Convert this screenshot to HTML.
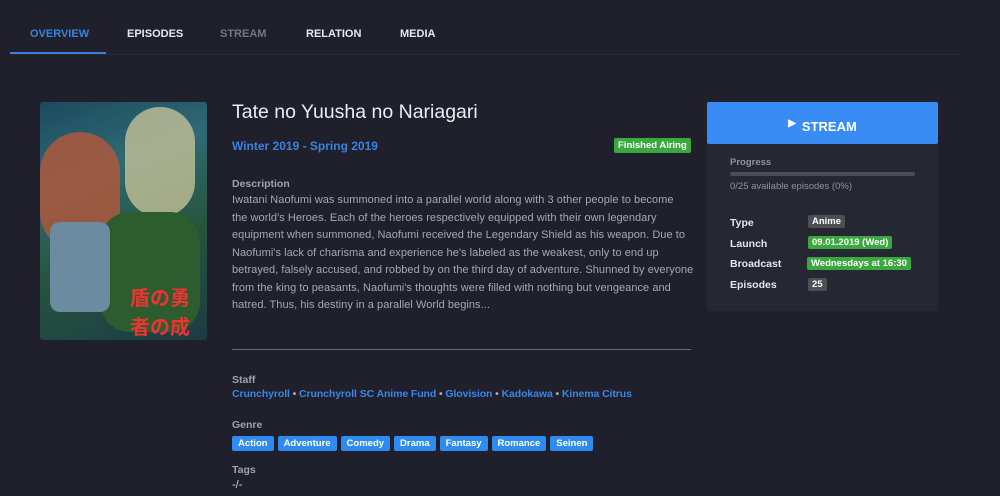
<!DOCTYPE html>
<html><head><style>
*{margin:0;padding:0;box-sizing:border-box}
body{width:1000px;height:496px;overflow:hidden;background:#1f202b;font-family:"Liberation Sans",Arial,sans-serif;color:#e6e6ea;position:relative}
.nav{position:absolute;left:10px;top:0;width:950px;height:55px;border-bottom:1px solid #272935}
.nav span{position:absolute;top:28px;font-size:11px;font-weight:bold;color:#e8e8ec}
.ul{position:absolute;left:10px;top:52px;width:96px;height:2px;background:#3a82e0}
.a{position:absolute}
.lbl{font-size:10.5px;font-weight:bold;color:#9ea3b3}
.desc{font-size:11px;line-height:17.5px;color:#a3a8b6;white-space:nowrap;letter-spacing:0.05px}
.tag{display:inline-block;background:#2e8bf0;color:#fff;font-size:9.5px;font-weight:bold;padding:2px 6px;border-radius:2px;margin-right:4px}
.b{display:inline-block;font-size:9.5px;font-weight:bold;color:#fff;padding:1px 4px;border-radius:2px}
.g{background:#3aa83e}.gr{background:#4e4f55}
a{color:#3a86ea;text-decoration:none}
</style></head><body>
<div class="nav">
<span style="left:20px;color:#3a82e0">OVERVIEW</span>
<span style="left:117px">EPISODES</span>
<span style="left:210px;color:#737684">STREAM</span>
<span style="left:296px">RELATION</span>
<span style="left:390px">MEDIA</span>
</div>
<div class="ul"></div>
<div class="a" style="left:40px;top:102px;width:167px;height:238px;border-radius:3px;overflow:hidden;background:linear-gradient(160deg,#1c4a5e 0%,#2f6a74 30%,#26553e 60%,#1c3b44 100%)">
<div class="a" style="left:0;top:30px;width:80px;height:120px;background:#b5573a;border-radius:40px;opacity:.8"></div>
<div class="a" style="left:85px;top:5px;width:70px;height:110px;background:#d9cf9e;border-radius:35px;opacity:.7"></div>
<div class="a" style="left:60px;top:110px;width:100px;height:120px;background:#2d5d2f;border-radius:30px"></div>
<div class="a" style="left:10px;top:120px;width:60px;height:90px;background:#6c8ba0;border-radius:10px"></div>
<div class="a" style="left:90px;top:180px;width:75px;height:50px;color:#e33;font-size:20px;font-weight:bold;font-family:'Noto Sans CJK JP',sans-serif">盾の勇者の成り上がり</div>
</div>
<div class="a" style="left:232px;top:101px;font-size:19.5px;color:#ececf0">Tate no Yuusha no Nariagari</div>
<div class="a" style="left:232px;top:139px;font-size:12px;font-weight:bold;color:#3a82e0">Winter 2019 - Spring 2019</div>
<div class="a b g" style="left:614px;top:138px;padding:2px 4px">Finished Airing</div>
<div class="a lbl" style="left:232px;top:178px">Description</div>
<div class="a desc" style="left:232px;top:192px">Iwatani Naofumi was summoned into a parallel world along with 3 other people to become<br>the world's Heroes. Each of the heroes respectively equipped with their own legendary<br>equipment when summoned, Naofumi received the Legendary Shield as his weapon. Due to<br>Naofumi's lack of charisma and experience he's labeled as the weakest, only to end up<br>betrayed, falsely accused, and robbed by on the third day of adventure. Shunned by everyone<br>from the king to peasants, Naofumi's thoughts were filled with nothing but vengeance and<br>hatred. Thus, his destiny in a parallel World begins...</div>
<div class="a" style="left:232px;top:349px;width:459px;height:1px;background:#6a6c76"></div>
<div class="a lbl" style="left:232px;top:374px">Staff</div>
<div class="a" style="left:232px;top:388px;font-size:10.5px;font-weight:bold;color:#aaa;letter-spacing:-0.1px"><a>Crunchyroll</a> • <a>Crunchyroll SC Anime Fund</a> • <a>Glovision</a> • <a>Kadokawa</a> • <a>Kinema Citrus</a></div>
<div class="a lbl" style="left:232px;top:419px">Genre</div>
<div class="a" style="left:232px;top:433px"><span class="tag">Action</span><span class="tag">Adventure</span><span class="tag">Comedy</span><span class="tag">Drama</span><span class="tag">Fantasy</span><span class="tag">Romance</span><span class="tag">Seinen</span></div>
<div class="a lbl" style="left:232px;top:464px">Tags</div>
<div class="a" style="left:232px;top:479px;font-size:11px;color:#ddd">-/-</div>
<div class="a" style="left:707px;top:102px;width:231px;height:209px;background:#252733">
<div style="height:42px;background:#3a8cf5;border-radius:2px;color:#fff;font-size:13px;font-weight:bold;text-align:center;line-height:50px"><span style="font-size:10px;position:relative;top:-5px;margin-right:6px">▶</span>STREAM</div>
<div class="a" style="left:23px;top:55px;font-size:9.5px;font-weight:bold;color:#8e93a2">Progress</div>
<div class="a" style="left:23px;top:70px;width:185px;height:4px;background:#4a4c57;border-radius:2px"></div>
<div class="a" style="left:23px;top:79px;font-size:9.5px;color:#8e93a2">0/25 available episodes (0%)</div>
<div class="a" style="left:23px;top:111px;font-size:10.5px;font-weight:bold;color:#e6e6ea;line-height:20.7px">Type<br>Launch<br>Broadcast<br>Episodes</div>
<div class="a b gr" style="left:101px;top:113px">Anime</div>
<div class="a b g" style="left:101px;top:134px">09.01.2019 (Wed)</div>
<div class="a b g" style="left:100px;top:155px">Wednesdays at 16:30</div>
<div class="a b gr" style="left:101px;top:176px">25</div>
</div>
</body></html>
